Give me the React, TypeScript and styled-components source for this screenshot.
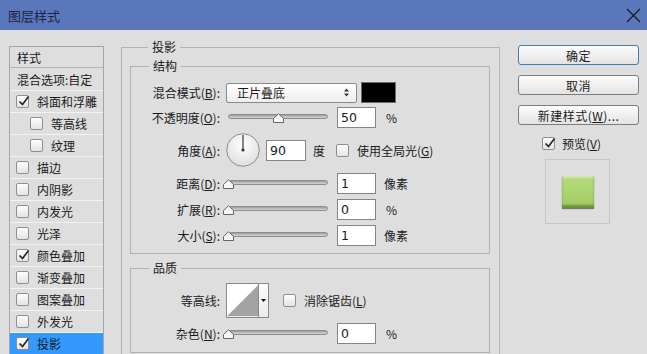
import styled, { createGlobalStyle } from "styled-components";

const GlobalStyle = createGlobalStyle`
  html, body {
    margin: 0;
    padding: 0;
    background: #dedede;
    overflow: hidden;
  }
  body {
    font-family: "Noto Sans CJK SC", "Liberation Sans", sans-serif;
    font-size: 12px;
    color: #1a1a1a;
  }
`;

const Dialog = styled.div`
  width: 647px;
  height: 354px;
  overflow: hidden;
  background: #dedede;
`;

const TitleBar = styled.div`
  height: 30px;
  box-sizing: border-box;
  background: #5b77bb;
  display: flex;
  align-items: center;
  justify-content: space-between;
  padding: 0 6px 0 8px;
  color: #1c2540;
  font-size: 13px;
`;

const Body = styled.div`
  display: flex;
  align-items: flex-start;
`;

const StyleList = styled.div`
  width: 95px;
  margin: 16px 0 0 9px;
  box-sizing: border-box;
  border: 1px solid #a5a5a5;
  border-bottom: none;
`;

const ListHeader = styled.div<{ $h: number }>`
  height: ${(p) => p.$h}px;
  box-sizing: border-box;
  display: flex;
  align-items: center;
  padding-left: 7px;
  border-bottom: 1px solid #b4b4b4;
  white-space: nowrap;
`;

const ListItem = styled.div<{ $indent?: boolean; $selected?: boolean }>`
  height: 22px;
  box-sizing: border-box;
  display: flex;
  align-items: center;
  gap: 8px;
  padding-left: ${(p) => (p.$indent ? 20 : 6)}px;
  border-bottom: 1px solid #f3f3f3;
  background: ${(p) => (p.$selected ? "#3399ff" : "transparent")};
  white-space: nowrap;
`;

const Main = styled.div`
  width: 379px;
  margin: 10px 0 0 17px;
`;

const Group = styled.fieldset`
  margin: 0;
  min-width: 0;
  border: 1px solid #b2b2b2;
  padding: 5px 9px 20px 8px;
`;

const Section = styled.fieldset<{ $pt: number; $pb: number }>`
  margin: 0;
  min-width: 0;
  border: 1px solid #b2b2b2;
  padding: ${(p) => p.$pt}px 0 ${(p) => p.$pb}px 0;
  & + & {
    margin-top: 7px;
  }
`;

const Legend = styled.legend`
  margin-left: 18px;
  padding: 0 4px;
  line-height: 14px;
  font-size: 12px;
`;

const Row = styled.div<{ $h: number; $mt?: number }>`
  display: grid;
  grid-template-columns: 89px auto;
  column-gap: 6px;
  align-items: center;
  height: ${(p) => p.$h}px;
  margin-top: ${(p) => p.$mt ?? 0}px;
`;

const Label = styled.div`
  text-align: right;
  white-space: nowrap;
`;

const Controls = styled.div`
  display: flex;
  align-items: center;
  white-space: nowrap;
`;

const Select = styled.div`
  width: 131px;
  height: 20px;
  box-sizing: border-box;
  border: 1px solid #8a8a8a;
  border-radius: 2px;
  background: linear-gradient(#ffffff, #eeeeee);
  display: flex;
  align-items: center;
  justify-content: space-between;
  padding: 0 7px 0 10px;
`;

const Swatch = styled.div`
  width: 35px;
  height: 21px;
  box-sizing: border-box;
  margin-left: 4px;
  background: #000;
  border: 1px solid #6d6d6d;
`;

const SliderBox = styled.div`
  position: relative;
  width: 100px;
  height: 10px;
  margin: 0 9px 0 2px;
`;

const Track = styled.div`
  height: 5px;
  margin-top: 1px;
  box-sizing: border-box;
  border: 1px solid #8d8d8d;
  border-radius: 3px;
  background: linear-gradient(#9c9c9c, #d6d6d6);
`;

const Thumb = styled.svg`
  position: absolute;
  top: 0;
`;

const Input = styled.div<{ $w?: number }>`
  width: ${(p) => p.$w ?? 39}px;
  height: 21px;
  box-sizing: border-box;
  border: 1px solid #858585;
  background: #fff;
  display: flex;
  align-items: center;
  padding-left: 3px;
  font-family: "DejaVu Sans", "Liberation Sans", sans-serif;
  font-size: 12.5px;
`;

const Unit = styled.span<{ $ml?: number }>`
  margin-left: ${(p) => p.$ml ?? 10}px;
  font-family: "Noto Sans CJK SC", "DejaVu Sans", sans-serif;
`;

const CheckLabel = styled.span`
  margin-left: 8px;
`;

const Box = styled.span`
  position: relative;
  display: inline-flex;
  width: 13px;
  height: 13px;
  flex: none;
  box-sizing: border-box;
  border: 1px solid #8f8f8f;
  border-radius: 2px;
  background: linear-gradient(#fdfdfd, #e4e4e4);
`;

const Tick = styled.svg`
  position: absolute;
  left: 0;
  top: -2px;
`;

const Contour = styled.div`
  width: 43px;
  height: 35px;
  box-sizing: border-box;
  border: 1px solid #8a8a8a;
  display: flex;
  background: #fff;
`;

const ContourArrow = styled.div`
  width: 9px;
  border-left: 1px solid #8a8a8a;
  display: flex;
  align-items: center;
  justify-content: center;
  background: linear-gradient(#fdfdfd, #ececec);
`;

const Side = styled.div`
  width: 121px;
  margin: 15px 0 0 18px;
  display: flex;
  flex-direction: column;
`;

const Button = styled.div<{ $default?: boolean }>`
  height: 20px;
  box-sizing: border-box;
  border: 1px solid ${(p) => (p.$default ? "#3d7fb3" : "#7c7c7c")};
  border-radius: 3px;
  background: linear-gradient(#fcfcfc, #e3e3e3);
  display: flex;
  align-items: center;
  justify-content: center;
  letter-spacing: 0.5px;
  & + & {
    margin-top: 10px;
  }
`;

const PreviewToggle = styled.div`
  display: flex;
  align-items: center;
  margin-top: 11px;
  padding-left: 24px;
  height: 14px;
`;

const PreviewBox = styled.div`
  width: 65px;
  height: 65px;
  box-sizing: border-box;
  margin: 9px 0 0 27px;
  border: 1px solid #c6c6c6;
  display: flex;
  align-items: center;
  justify-content: center;
`;

const PreviewSwatch = styled.div`
  width: 32px;
  height: 32px;
  background: linear-gradient(#b6db7e, #a0cc60);
  box-shadow: inset 0 -3px 2px rgba(70, 95, 25, 0.55), inset 0 2px 1px rgba(255, 255, 255, 0.35),
    0 1px 1px rgba(0, 0, 0, 0.45);
`;

function Check({ checked }: { checked?: boolean }) {
  return (
    <Box>
      {checked && (
        <Tick width="14" height="14" viewBox="0 0 14 14">
          <path d="M2.5 7.5 L5.5 10.5 L11.5 2.5" fill="none" stroke="#222" strokeWidth="1.6" />
        </Tick>
      )}
    </Box>
  );
}

function Slider({ value }: { value: number }) {
  return (
    <SliderBox>
      <Track />
      <Thumb width="11" height="10" viewBox="0 0 11 10" style={{ left: value - 5.5 }}>
        <path d="M0.5 9.5 L0.5 5.5 L5.5 0.8 L10.5 5.5 L10.5 9.5 Z" fill="#f6f6f6" stroke="#666" />
      </Thumb>
    </SliderBox>
  );
}

const styles: { name: string; checked?: boolean; indent?: boolean; selected?: boolean }[] = [
  { name: "斜面和浮雕", checked: true },
  { name: "等高线", indent: true },
  { name: "纹理", indent: true },
  { name: "描边" },
  { name: "内阴影" },
  { name: "内发光" },
  { name: "光泽" },
  { name: "颜色叠加", checked: true },
  { name: "渐变叠加" },
  { name: "图案叠加" },
  { name: "外发光" },
  { name: "投影", checked: true, selected: true },
];

export default function App() {
  return (
    <Dialog>
      <GlobalStyle />
      <TitleBar>
        <span>图层样式</span>
        <svg width="15" height="15" viewBox="0 0 15 15">
          <path d="M1 1 L14 14 M14 1 L1 14" stroke="#1b1b1b" strokeWidth="1.3" />
        </svg>
      </TitleBar>
      <Body>
        <StyleList>
          <ListHeader $h={21}>样式</ListHeader>
          <ListHeader $h={23} style={{ borderBottomColor: "#f3f3f3" }}>
            混合选项:自定
          </ListHeader>
          {styles.map((s) => (
            <ListItem key={s.name} $indent={s.indent} $selected={s.selected}>
              <Check checked={s.checked} />
              <span>{s.name}</span>
            </ListItem>
          ))}
        </StyleList>

        <Main>
          <Group>
            <Legend>投影</Legend>
            <Section $pt={9} $pb={7}>
              <Legend>结构</Legend>
              <Row $h={20}>
                <Label>
                  混合模式(<u>B</u>):
                </Label>
                <Controls>
                  <Select>
                    <span>正片叠底</span>
                    <svg width="5" height="9" viewBox="0 0 5 9">
                      <path d="M0 3.5 L2.5 0.5 L5 3.5 Z M0 5.5 L2.5 8.5 L5 5.5 Z" fill="#333" />
                    </svg>
                  </Select>
                  <Swatch />
                </Controls>
              </Row>
              <Row $h={21} $mt={5}>
                <Label>
                  不透明度(<u>O</u>):
                </Label>
                <Controls>
                  <Slider value={50} />
                  <Input>50</Input>
                  <Unit>%</Unit>
                </Controls>
              </Row>
              <Row $h={34} $mt={5}>
                <Label>
                  角度(<u>A</u>):
                </Label>
                <Controls>
                  <svg width="34" height="34" viewBox="0 0 34 34">
                    <defs>
                      <radialGradient id="dial" cx="50%" cy="35%" r="65%">
                        <stop offset="0" stopColor="#ffffff" />
                        <stop offset="1" stopColor="#dedede" />
                      </radialGradient>
                    </defs>
                    <circle cx="17" cy="17" r="16.3" fill="url(#dial)" stroke="#8c8c8c" />
                    <path d="M17 17 L17 2" stroke="#444" strokeWidth="1.3" />
                    <circle cx="17" cy="17" r="1.6" fill="#333" />
                  </svg>
                  <Input $w={40} style={{ marginLeft: 6 }}>
                    90
                  </Input>
                  <Unit $ml={7}>度</Unit>
                  <span style={{ marginLeft: 11, display: "inline-flex" }}>
                    <Check />
                  </span>
                  <CheckLabel>
                    使用全局光(<u>G</u>)
                  </CheckLabel>
                </Controls>
              </Row>
              <Row $h={21} $mt={6}>
                <Label>
                  距离(<u>D</u>):
                </Label>
                <Controls>
                  <Slider value={0} />
                  <Input>1</Input>
                  <Unit $ml={8}>像素</Unit>
                </Controls>
              </Row>
              <Row $h={21} $mt={5}>
                <Label>
                  扩展(<u>R</u>):
                </Label>
                <Controls>
                  <Slider value={0} />
                  <Input>0</Input>
                  <Unit>%</Unit>
                </Controls>
              </Row>
              <Row $h={21} $mt={5}>
                <Label>
                  大小(<u>S</u>):
                </Label>
                <Controls>
                  <Slider value={0} />
                  <Input>1</Input>
                  <Unit $ml={8}>像素</Unit>
                </Controls>
              </Row>
            </Section>
            <Section $pt={8} $pb={8}>
              <Legend>品质</Legend>
              <Row $h={35}>
                <Label>等高线:</Label>
                <Controls>
                  <Contour>
                    <svg width="33" height="33" viewBox="0 0 33 33">
                      <path d="M0 33 L33 0 L33 33 Z" fill="#a3a3a3" />
                    </svg>
                    <ContourArrow>
                      <svg width="5" height="3" viewBox="0 0 5 3">
                        <path d="M0 0 L5 0 L2.5 3 Z" fill="#111" />
                      </svg>
                    </ContourArrow>
                  </Contour>
                  <span style={{ marginLeft: 14, display: "inline-flex" }}>
                    <Check />
                  </span>
                  <CheckLabel>
                    消除锯齿(<u>L</u>)
                  </CheckLabel>
                </Controls>
              </Row>
              <Row $h={21} $mt={5}>
                <Label>
                  杂色(<u>N</u>):
                </Label>
                <Controls>
                  <Slider value={0} />
                  <Input>0</Input>
                  <Unit>%</Unit>
                </Controls>
              </Row>
            </Section>
          </Group>
        </Main>

        <Side>
          <Button $default>确定</Button>
          <Button>取消</Button>
          <Button>
            新建样式(<u>W</u>)...
          </Button>
          <PreviewToggle>
            <Check checked />
            <CheckLabel style={{ marginLeft: 7 }}>
              预览(<u>V</u>)
            </CheckLabel>
          </PreviewToggle>
          <PreviewBox>
            <PreviewSwatch />
          </PreviewBox>
        </Side>
      </Body>
    </Dialog>
  );
}
